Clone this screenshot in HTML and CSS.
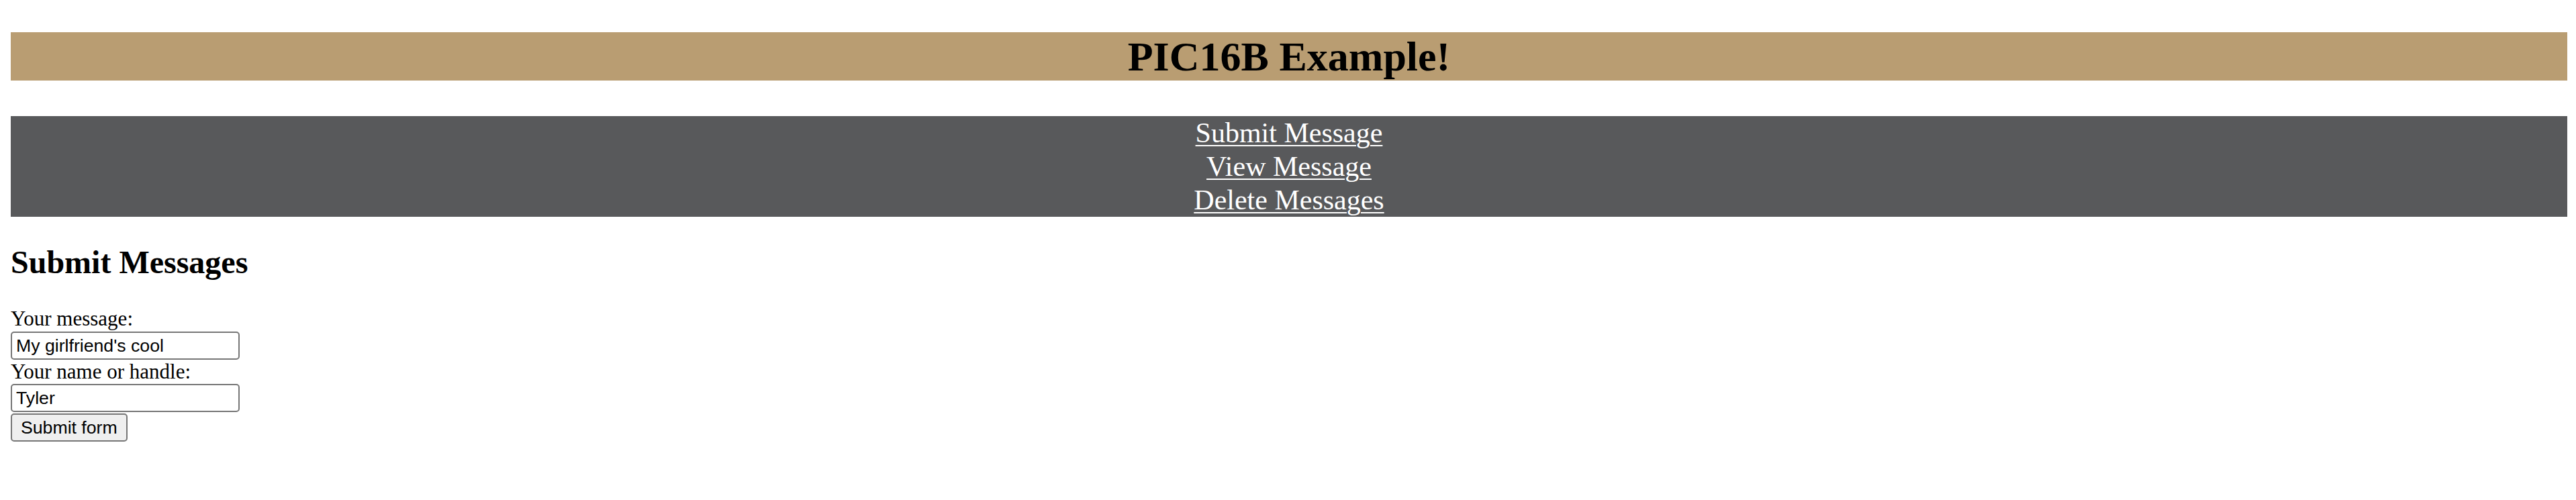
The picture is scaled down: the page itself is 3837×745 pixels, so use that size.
FILE: index.html
```html
<!DOCTYPE html>
<html>
<head>
<meta charset="utf-8">
<title>PIC16B Example!</title>
<link rel="stylesheet" href="styles.css">
</head>
<body>
<div class="page">
  <header class="banner"><h1 class="title">PIC16B Example!</h1></header>
  <nav class="nav">
    <a class="nav-link" href="#">Submit Message</a>
    <a class="nav-link" href="#">View Message</a>
    <a class="nav-link" href="#">Delete Messages</a>
  </nav>
  <h2 class="section-title">Submit Messages</h2>
  <form class="form">
    <label class="label" for="message">Your message:</label>
    <input class="field field-first" type="text" id="message" value="My girlfriend's cool">
    <label class="label" for="handle">Your name or handle:</label>
    <input class="field" type="text" id="handle" value="Tyler">
    <button class="button" type="button">Submit form</button>
  </form>
</div>
</body>
</html>
```

FILE: styles.css
```css
html, body {
  margin: 0;
  padding: 0;
  background: #ffffff;
}

body {
  font-family: "Liberation Serif", "Times New Roman", serif;
  color: #000000;
}

.page {
  width: 3808px;
  padding-left: 16px;
  display: flex;
  flex-direction: column;
}

.banner {
  margin-top: 48px;
  height: 72px;
  background: #b99d72;
  overflow: hidden;
}

.title {
  margin: 0;
  font-size: 62px;
  line-height: 72px;
  font-weight: bold;
  text-align: center;
}

.nav {
  margin-top: 53px;
  height: 150px;
  background: #58595b;
  display: flex;
  flex-direction: column;
  align-items: center;
}

.nav-link {
  display: block;
  height: 50px;
  font-size: 42px;
  line-height: 50px;
  color: #ffffff;
  text-decoration: underline;
  text-decoration-thickness: 2px;
  text-underline-offset: 4px;
}

.section-title {
  margin: 40px 0 0 0;
  font-size: 48px;
  line-height: 56px;
  font-weight: bold;
}

.form {
  margin-top: 38px;
  display: flex;
  flex-direction: column;
  align-items: flex-start;
}

.label {
  font-size: 31px;
  line-height: 36px;
  height: 36px;
}

.field {
  box-sizing: border-box;
  width: 341px;
  height: 42px;
  margin: 0;
  padding: 2px 6px;
  border: 2px solid #767676;
  border-radius: 5px;
  font-family: "Liberation Sans", Arial, sans-serif;
  font-size: 26.67px;
  color: #000000;
  background: #ffffff;
}

.field-first {
  margin-top: 1px;
}

.button {
  box-sizing: border-box;
  margin: 2px 0 0 0;
  height: 42px;
  padding: 0 13px;
  border: 2px solid #767676;
  border-radius: 5px;
  background: #efefef;
  font-family: "Liberation Sans", Arial, sans-serif;
  font-size: 26.67px;
  color: #000000;
}
```
